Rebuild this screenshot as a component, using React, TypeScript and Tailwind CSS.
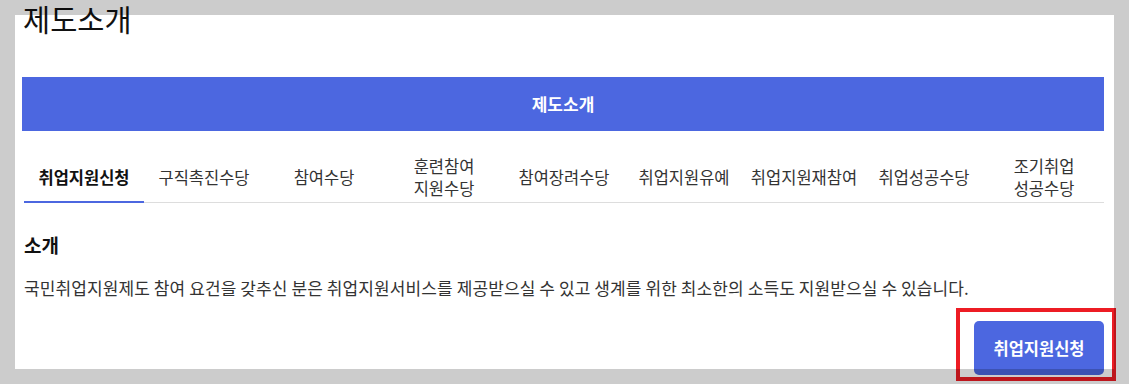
const tabs = [
  ["취업지원신청"],
  ["구직촉진수당"],
  ["참여수당"],
  ["훈련참여", "지원수당"],
  ["참여장려수당"],
  ["취업지원유예"],
  ["취업지원재참여"],
  ["취업성공수당"],
  ["조기취업", "성공수당"],
];

const App = () => {
  const active = 0;

  return (
    <div className="relative w-[1129px] h-[384px] overflow-hidden bg-white font-['Noto_Sans_CJK_KR','Noto_Sans',sans-serif] text-[#222]">
      <div className="pl-[22px] pr-[25px]">
        <h1 className="pl-[1px] h-[36px] leading-[36px] text-[29.5px] font-normal text-[#111]">
          제도소개
        </h1>

        <div className="mt-[41px] h-[54px] flex items-center justify-center bg-[#4c67e0]">
          <span className="text-[17px] font-bold text-white">제도소개</span>
        </div>

        <div className="mt-[20px] ml-[2px] grid grid-cols-9">
          {tabs.map((lines, i) => (
            <div
              key={i}
              className={
                i === active
                  ? "h-[52px] flex flex-col items-center justify-center border-b-2 border-[#4c67e0] pt-[1px] text-[16.5px] leading-[22px] font-bold text-[#111]"
                  : "h-[52px] flex flex-col items-center justify-center border-b border-[#dddddd] text-[16.5px] leading-[22px] text-[#333]"
              }
            >
              {lines.map((l) => (
                <span key={l}>{l}</span>
              ))}
            </div>
          ))}
        </div>

        <h2 className="mt-[30px] pl-[2px] leading-[24px] text-[19px] font-bold text-[#111]">소개</h2>
        <p className="mt-[19px] pl-[2px] leading-[24px] text-[17px] tracking-[0.1px] text-[#333]">
          국민취업지원제도 참여 요건을 갖추신 분은 취업지원서비스를 제공받으실 수 있고 생계를 위한 최소한의 소득도 지원받으실 수 있습니다.
        </p>

        <div className="mt-[21px] flex justify-end">
          <div className="relative">
            <button className="w-[130px] h-[54px] rounded-[5px] bg-[#4c67e0] text-[16.5px] font-bold text-white">
              취업지원신청
            </button>
            <div className="absolute left-[-18px] right-[-12px] top-[-13px] bottom-[-6px] border-4 border-[#ed1c24] pointer-events-none" />
          </div>
        </div>
      </div>

      <div className="absolute inset-0 z-10 border-[15px] border-black/20 pointer-events-none" />
    </div>
  );
};

export default App;
